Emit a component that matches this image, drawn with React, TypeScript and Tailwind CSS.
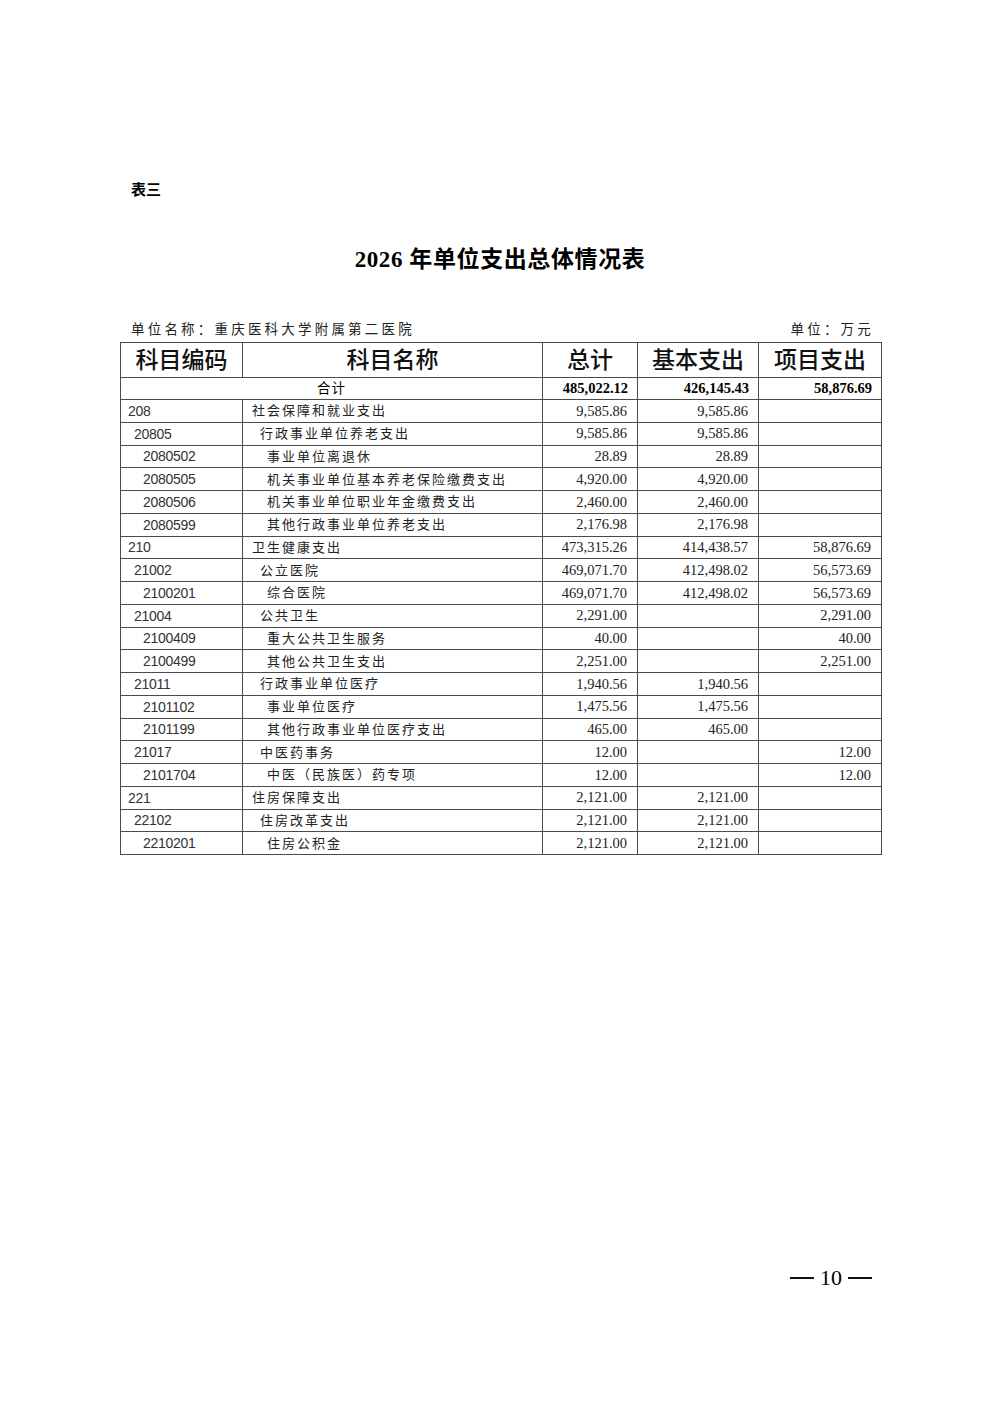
type Row = {
  code: string;
  level: 0 | 1 | 2;
  name: string;
  total: string;
  basic: string;
  project: string;
};

const rows: Row[] = [
  { code: "208", level: 0, name: "社会保障和就业支出", total: "9,585.86", basic: "9,585.86", project: "" },
  { code: "20805", level: 1, name: "行政事业单位养老支出", total: "9,585.86", basic: "9,585.86", project: "" },
  { code: "2080502", level: 2, name: "事业单位离退休", total: "28.89", basic: "28.89", project: "" },
  { code: "2080505", level: 2, name: "机关事业单位基本养老保险缴费支出", total: "4,920.00", basic: "4,920.00", project: "" },
  { code: "2080506", level: 2, name: "机关事业单位职业年金缴费支出", total: "2,460.00", basic: "2,460.00", project: "" },
  { code: "2080599", level: 2, name: "其他行政事业单位养老支出", total: "2,176.98", basic: "2,176.98", project: "" },
  { code: "210", level: 0, name: "卫生健康支出", total: "473,315.26", basic: "414,438.57", project: "58,876.69" },
  { code: "21002", level: 1, name: "公立医院", total: "469,071.70", basic: "412,498.02", project: "56,573.69" },
  { code: "2100201", level: 2, name: "综合医院", total: "469,071.70", basic: "412,498.02", project: "56,573.69" },
  { code: "21004", level: 1, name: "公共卫生", total: "2,291.00", basic: "", project: "2,291.00" },
  { code: "2100409", level: 2, name: "重大公共卫生服务", total: "40.00", basic: "", project: "40.00" },
  { code: "2100499", level: 2, name: "其他公共卫生支出", total: "2,251.00", basic: "", project: "2,251.00" },
  { code: "21011", level: 1, name: "行政事业单位医疗", total: "1,940.56", basic: "1,940.56", project: "" },
  { code: "2101102", level: 2, name: "事业单位医疗", total: "1,475.56", basic: "1,475.56", project: "" },
  { code: "2101199", level: 2, name: "其他行政事业单位医疗支出", total: "465.00", basic: "465.00", project: "" },
  { code: "21017", level: 1, name: "中医药事务", total: "12.00", basic: "", project: "12.00" },
  { code: "2101704", level: 2, name: "中医（民族医）药专项", total: "12.00", basic: "", project: "12.00" },
  { code: "221", level: 0, name: "住房保障支出", total: "2,121.00", basic: "2,121.00", project: "" },
  { code: "22102", level: 1, name: "住房改革支出", total: "2,121.00", basic: "2,121.00", project: "" },
  { code: "2210201", level: 2, name: "住房公积金", total: "2,121.00", basic: "2,121.00", project: "" },
];

const codePad = ["pl-[7px]", "pl-[13px]", "pl-[22px]"];
const namePad = ["pl-[9px]", "pl-[17px]", "pl-[24px]"];

const cjk = "font-['Noto_Sans_CJK_SC',sans-serif]";
const serif = "font-['Liberation_Serif','Noto_Sans_CJK_SC',serif]";
const cell = "border border-[#4a4a4a] p-0 leading-none";

export default function App() {
  return (
    <div className="w-[1000px] h-[1414px] bg-white relative text-black">
      <div className="pt-[180px] pl-[131px]">
        <p className={`${cjk} text-[15px] font-bold leading-[18px]`}>表三</p>
      </div>

      <h1 className={`mt-[48px] text-center ${serif} font-bold text-[23px] leading-[28px] tracking-[0.6px]`}>
        2026 年单位支出总体情况表
      </h1>

      <div className={`mt-[45px] ml-[131px] mr-[129px] flex justify-between ${cjk} text-[13.5px] leading-[18px] tracking-[3.2px] text-[#222]`}>
        <span>单位名称：重庆医科大学附属第二医院</span>
        <span className="-mr-[3px]">单位：万元</span>
      </div>

      <table className="mt-[5px] ml-[120px] border-collapse table-fixed w-[761px]">
        <colgroup>
          <col className="w-[122px]" />
          <col className="w-[300px]" />
          <col className="w-[95px]" />
          <col className="w-[121px]" />
          <col className="w-[123px]" />
        </colgroup>
        <thead>
          <tr className={`h-[35px] ${cjk} text-[23px] text-[#111]`}>
            <th className={`${cell} font-medium pb-[4px]`}>科目编码</th>
            <th className={`${cell} font-medium pb-[4px]`}>科目名称</th>
            <th className={`${cell} font-medium pb-[4px]`}>总计</th>
            <th className={`${cell} font-medium pb-[4px]`}>基本支出</th>
            <th className={`${cell} font-medium pb-[4px]`}>项目支出</th>
          </tr>
        </thead>
        <tbody>
          <tr className="h-[22px]">
            <td colSpan={2} className={`${cell} text-center ${cjk} text-[13.5px] tracking-[1px] pb-[2px]`}>
              合计
            </td>
            <td className={`${cell} text-right pr-[9px] ${serif} font-bold text-[14.5px]`}>485,022.12</td>
            <td className={`${cell} text-right pr-[9px] ${serif} font-bold text-[14.5px]`}>426,145.43</td>
            <td className={`${cell} text-right pr-[9px] ${serif} font-bold text-[14.5px]`}>58,876.69</td>
          </tr>
          {rows.map((r) => (
            <tr key={r.code} className="h-[22.75px]">
              <td className={`${cell} ${codePad[r.level]} font-['Liberation_Sans',sans-serif] text-[14px] text-[#333] tracking-[-0.3px]`}>
                {r.code}
              </td>
              <td className={`${cell} ${namePad[r.level]} ${cjk} text-[13px] tracking-[2px] text-[#222] pb-[2px]`}>
                {r.name}
              </td>
              <td className={`${cell} text-right pr-[10px] ${serif} text-[14.5px] text-[#222]`}>{r.total}</td>
              <td className={`${cell} text-right pr-[10px] ${serif} text-[14.5px] text-[#222]`}>{r.basic}</td>
              <td className={`${cell} text-right pr-[10px] ${serif} text-[14.5px] text-[#222]`}>{r.project}</td>
            </tr>
          ))}
        </tbody>
      </table>

      <div className="absolute left-[790px] top-[1265px] flex items-center gap-[3px]">
        <span className="w-[24px] h-[2px] bg-[#111]" />
        <span className={`${serif} text-[22px] leading-[26px] px-[3px]`}>10</span>
        <span className="w-[24px] h-[2px] bg-[#111]" />
      </div>
    </div>
  );
}
